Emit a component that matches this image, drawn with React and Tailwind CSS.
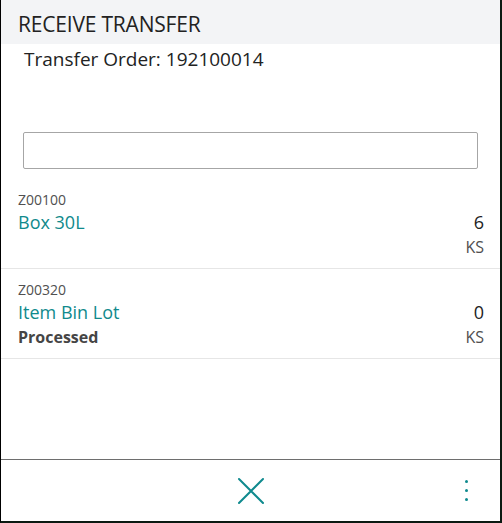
import React from 'react';

const items = [
  { code: 'Z00100', name: 'Box 30L', qty: 6, unit: 'KS', status: null },
  { code: 'Z00320', name: 'Item Bin Lot', qty: 0, unit: 'KS', status: 'Processed' },
];

export default function App() {
  return (
    <div
      className="h-[523px] w-[502px] flex flex-col bg-white border-l border-r-2 border-b-2 border-l-black border-r-[#0b1a12] border-b-[#0b1a12] text-[#212121]"
      style={{ fontFamily: '"Open Sans", "Noto Sans", sans-serif' }}
    >
      {/* Header */}
      <div className="h-[44px] shrink-0 bg-[#f3f4f6] flex items-center pl-[17px] pt-[6px]">
        <h1 className="text-[21px] tracking-[-0.2px] text-[#222]">RECEIVE TRANSFER</h1>
      </div>
      <div className="pl-[23px] pt-[3px] text-[19px] text-[#222] leading-[24px]">
        Transfer Order: 192100014
      </div>

      <div className="px-[22px] mt-[61px]">
        <input className="w-full h-[37px] border border-[#a6a6a6] rounded-[2px] outline-none px-2" />
      </div>

      {/* Lines */}
      <div className="mt-[10px] flex-1">
        {items.map((it) => (
          <div key={it.code} className="border-b border-[#e6e6e6] pl-[17px] pr-[16px] pt-[12px] pb-[9px]">
            <div className="text-[14px] text-[#505050] leading-[18px]">{it.code}</div>
            <div className="flex justify-between items-baseline leading-[26px]">
              <span className="text-[18px] text-[#108a8c]">{it.name}</span>
              <span className="text-[18px] text-[#222]">{it.qty}</span>
            </div>
            <div className="flex justify-between items-baseline leading-[24px]">
              <span className="text-[16px] font-bold text-[#454545]">{it.status}</span>
              <span className="text-[16px] text-[#505050]">{it.unit}</span>
            </div>
          </div>
        ))}
      </div>

      {/* Footer */}
      <div className="h-[62px] shrink-0 border-t border-[#6e6e6e] flex items-center relative">
        <div className="flex-1 flex justify-center">
          <svg width="28" height="28" viewBox="0 0 28 28" className="ml-[1px]">
            <path d="M2 2 L26 26 M26 2 L2 26" stroke="#0f8a8e" strokeWidth="2" strokeLinecap="round" />
          </svg>
        </div>
        <div className="absolute right-[32px] top-[20px] flex flex-col gap-[6px]">
          <span className="w-[3px] h-[3px] rounded-full bg-[#0f8a8e]" />
          <span className="w-[3px] h-[3px] rounded-full bg-[#0f8a8e]" />
          <span className="w-[3px] h-[3px] rounded-full bg-[#0f8a8e]" />
        </div>
      </div>
    </div>
  );
}
